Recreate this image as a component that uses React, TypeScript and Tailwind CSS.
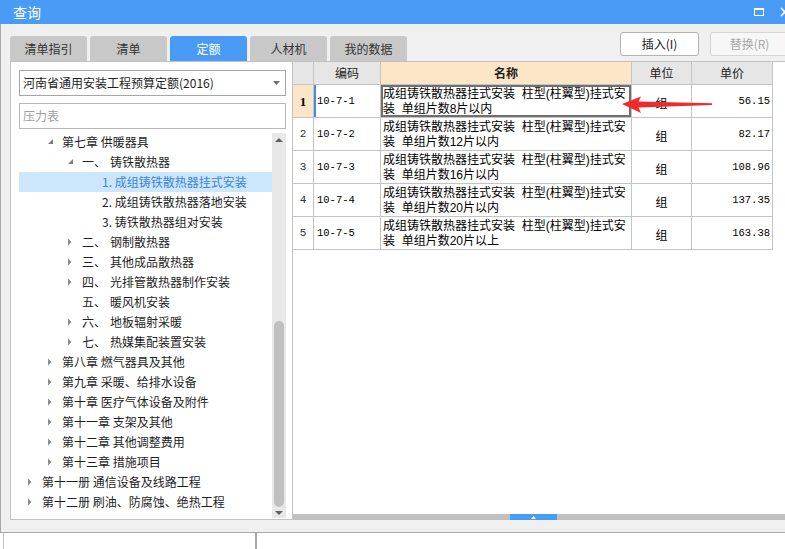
import React from "react";

type TNode = {
  level: number;
  state: "open" | "closed" | "leaf";
  prefix?: string;
  text: string;
  selected?: boolean;
};

const tree: TNode[] = [
  { level: 1, state: "open", text: "第七章 供暖器具" },
  { level: 2, state: "open", prefix: "一、", text: "铸铁散热器" },
  { level: 3, state: "leaf", text: "1. 成组铸铁散热器挂式安装", selected: true },
  { level: 3, state: "leaf", text: "2. 成组铸铁散热器落地安装" },
  { level: 3, state: "leaf", text: "3. 铸铁散热器组对安装" },
  { level: 2, state: "closed", prefix: "二、", text: "钢制散热器" },
  { level: 2, state: "closed", prefix: "三、", text: "其他成品散热器" },
  { level: 2, state: "closed", prefix: "四、", text: "光排管散热器制作安装" },
  { level: 2, state: "leaf", prefix: "五、", text: "暖风机安装" },
  { level: 2, state: "closed", prefix: "六、", text: "地板辐射采暖" },
  { level: 2, state: "closed", prefix: "七、", text: "热媒集配装置安装" },
  { level: 1, state: "closed", text: "第八章 燃气器具及其他" },
  { level: 1, state: "closed", text: "第九章 采暖、给排水设备" },
  { level: 1, state: "closed", text: "第十章 医疗气体设备及附件" },
  { level: 1, state: "closed", text: "第十一章 支架及其他" },
  { level: 1, state: "closed", text: "第十二章 其他调整费用" },
  { level: 1, state: "closed", text: "第十三章 措施项目" },
  { level: 0, state: "closed", text: "第十一册 通信设备及线路工程" },
  { level: 0, state: "closed", text: "第十二册 刷油、防腐蚀、绝热工程" },
];

const levelPad = ["pl-[7px]", "pl-[27px]", "pl-[47px]", "pl-[67px]"];

const rows = [
  { code: "10-7-1", l2: "装  单组片数8片以内", price: "56.15" },
  { code: "10-7-2", l2: "装  单组片数12片以内", price: "82.17" },
  { code: "10-7-3", l2: "装  单组片数16片以内", price: "108.96" },
  { code: "10-7-4", l2: "装  单组片数20片以内", price: "137.35" },
  { code: "10-7-5", l2: "装  单组片数20片以上", price: "163.38" },
];

function Arrow({ state }: { state: TNode["state"] }) {
  if (state === "open")
    return (
      <svg width="8" height="8" viewBox="0 0 8 8" className="ml-[1px]">
        <path d="M6 1 L6 6 L1 6 Z" fill="#7a7a7a" />
      </svg>
    );
  if (state === "closed")
    return (
      <svg width="8" height="8" viewBox="0 0 8 8" className="ml-[1px]">
        <path d="M1 0.5 L4.5 4 L1 7.5 Z" fill="#8a8a8a" />
      </svg>
    );
  return null;
}

function TreeRow({ n }: { n: TNode }) {
  return (
    <div
      className={`h-[20px] flex items-center whitespace-nowrap ${levelPad[n.level]} ${
        n.selected ? "bg-[#cce6fb] text-[#3a84de]" : "text-[#1e1e1e]"
      }`}
    >
      <span className="w-[16px] h-[20px] flex items-center shrink-0">
        <Arrow state={n.state} />
      </span>
      {n.prefix && <span className="w-[28px] shrink-0">{n.prefix}</span>}
      <span>{n.text}</span>
    </div>
  );
}

export default function App() {
  return (
    <div className="relative w-[785px] h-[549px] overflow-hidden bg-[#f0f0f0] flex flex-col font-['Noto_Sans_CJK_SC','Microsoft_YaHei',sans-serif] text-[12px] leading-none">
      {/* title bar */}
      <div className="h-[24px] shrink-0 bg-[#4a9bf5] flex items-center pl-[13px] text-white text-[14px]">
        <span>查询</span>
        <div className="ml-auto flex items-center">
          <div className="w-[10px] h-[8px] border border-white border-t-2 mr-[16px]" />
          <svg width="12" height="10" viewBox="0 0 12 10" className="mr-[-7px]">
            <path d="M1 1 L9 9 M9 1 L1 9" stroke="white" strokeWidth="1.6" />
          </svg>
        </div>
      </div>

      {/* frame */}
      <div className="shrink-0 flex flex-col border-l border-b border-[#a9a9a9]">
        {/* tabs row */}
        <div className="h-[37px] flex items-end pl-[9px] shrink-0">
          {["清单指引", "清单", "定额", "人材机", "我的数据"].map((t, i) => (
            <div
              key={t}
              className={`w-[77px] h-[25px] shrink-0 rounded-t-[3px] flex items-center justify-center ${
                i > 0 ? "ml-[3px]" : ""
              } ${i === 2 ? "bg-[#4a9bf5] text-white" : "bg-[#c8c8c8] text-[#333]"}`}
            >
              {t}
            </div>
          ))}
          <div className="self-start mt-[8px] ml-[213px] flex shrink-0">
            <div className="w-[79px] h-[24px] bg-white border border-[#b3b3b3] rounded-[3px] flex items-center justify-center text-[#222]">
              插入(I)
            </div>
            <div className="w-[79px] h-[24px] ml-[11px] bg-[#f7f7f7] border border-[#d6d6d6] rounded-[3px] flex items-center justify-center text-[#a8a8a8]">
              替换(R)
            </div>
          </div>
        </div>

        {/* main */}
        <div className="h-[459px] flex shrink-0">
          {/* left panel */}
          <div className="ml-[9px] w-[283px] shrink-0 bg-white border border-[#c2c2c2] flex flex-col pl-[8px] pt-[8px]">
            <div className="w-[267px] h-[26px] border border-[#a6a6a6] flex items-center pl-[3px] text-[#1e1e1e] shrink-0">
              <span>河南省通用安装工程预算定额(2016)</span>
              <svg width="7" height="4" viewBox="0 0 7 4" className="ml-auto mr-[5px]">
                <path d="M0 0 L7 0 L3.5 4 Z" fill="#707070" />
              </svg>
            </div>
            <div className="w-[267px] h-[26px] mt-[7px] border border-[#b8b8b8] flex items-center pl-[3px] text-[#a0a0a0] shrink-0">
              压力表
            </div>
            <div className="mt-[3px] flex h-[386px]">
              <div className="w-[253px] flex flex-col">
                {tree.map((n, i) => (
                  <TreeRow key={i} n={n} />
                ))}
              </div>
              <div className="w-[14px] bg-[#e8e8e8] flex flex-col items-center mt-[1px]">
                <div className="h-[13px] flex items-center">
                  <svg width="8" height="4" viewBox="0 0 8 4">
                    <path d="M0 4 L8 4 L4 0 Z" fill="#606060" />
                  </svg>
                </div>
                <div className="mt-[175px] w-[10px] h-[186px] rounded-full bg-[#c0c0c0]" />
                <div className="h-[11px] flex items-center">
                  <svg width="8" height="4" viewBox="0 0 8 4">
                    <path d="M0 0 L8 0 L4 4 Z" fill="#606060" />
                  </svg>
                </div>
              </div>
            </div>
          </div>

          {/* right panel */}
          <div className="flex-1 bg-white border-t border-[#c2c2c2] flex flex-col">
            <div className="flex-1">
              {/* header */}
              <div className="flex h-[23px] text-[#222]">
                <div className="w-[21px] bg-[#e6e6e6] border-r border-b border-[#c4c4c4]" />
                <div className="w-[67px] bg-[#e6e6e6] border-r border-b border-[#c4c4c4] flex items-center justify-center">
                  编码
                </div>
                <div className="w-[251px] bg-[#fde6c8] border-r border-b border-[#c4c4c4] flex items-center justify-center font-bold">
                  名称
                </div>
                <div className="w-[60px] bg-[#e6e6e6] border-r border-b border-[#c4c4c4] flex items-center justify-center">
                  单位
                </div>
                <div className="w-[81px] bg-[#e6e6e6] border-r border-b border-[#c4c4c4] flex items-center justify-center">
                  单价
                </div>
              </div>
              {rows.map((r, i) => (
                <div key={r.code} className="flex h-[33px] text-black">
                  <div
                    className={`w-[21px] border-r border-b border-[#c4c4c4] flex items-center justify-center ${
                      i === 0
                        ? "bg-[#fde6c8] font-bold font-['Liberation_Serif',serif] text-[13px]"
                        : "font-['Liberation_Mono',monospace] text-[11px] text-[#333]"
                    }`}
                  >
                    {i + 1}
                  </div>
                  <div
                    className={`w-[67px] border-r border-b border-[#c4c4c4] flex items-center pl-[3px] font-['Liberation_Mono',monospace] text-[10.5px] ${
                      i === 0 ? "shadow-[inset_2px_0_0_#3d8ef0]" : ""
                    }`}
                  >
                    {r.code}
                  </div>
                  <div
                    className={`w-[251px] border-r border-b border-[#c4c4c4] pl-[2px] pt-[2px] leading-[14.5px] whitespace-pre overflow-hidden font-['Liberation_Sans','Noto_Sans_CJK_SC',sans-serif] ${
                      i === 0 ? "shadow-[inset_0_0_0_2px_#6f6f6f]" : ""
                    }`}
                  >
                    <div className="h-[14.5px]">成组铸铁散热器挂式安装  柱型(柱翼型)挂式安</div>
                    <div className="h-[14.5px]">{r.l2}</div>
                  </div>
                  <div className="w-[60px] border-r border-b border-[#c4c4c4] flex items-center justify-center pt-[3px]">
                    组
                  </div>
                  <div className="w-[81px] border-r border-b border-[#c4c4c4] flex items-center justify-end pr-[2px] font-['Liberation_Mono',monospace] text-[10.5px]">
                    {r.price}
                  </div>
                </div>
              ))}
            </div>
            <div className="h-[6px] bg-[#c0c0c0] shrink-0 flex">
              <div className="ml-[217px] w-[47px] h-full bg-[#4a9bf5] flex items-center justify-center">
                <svg width="5" height="3" viewBox="0 0 5 3">
                  <path d="M0 3 L5 3 L2.5 0 Z" fill="white" />
                </svg>
              </div>
            </div>
          </div>
        </div>

        {/* band */}
        <div className="h-[12px] shrink-0" />
      </div>

      {/* bottom strip */}
      <div className="flex-1 bg-white flex">
        <div className="ml-[3px] w-[252px] border-l border-[#c4c4c4]" />
        <div className="border-l-2 border-[#ababab]" />
      </div>

      {/* red arrow annotation */}
      <svg
        className="absolute left-[615px] top-[90px]"
        width="100"
        height="28"
        viewBox="0 0 100 28"
      >
        <path
          d="M7 14 L26 6.5 L23.5 11.5 L97 13.2 L97 15 L23.5 17.5 L26 23 Z"
          fill="#f02a2a"
        />
      </svg>
    </div>
  );
}
